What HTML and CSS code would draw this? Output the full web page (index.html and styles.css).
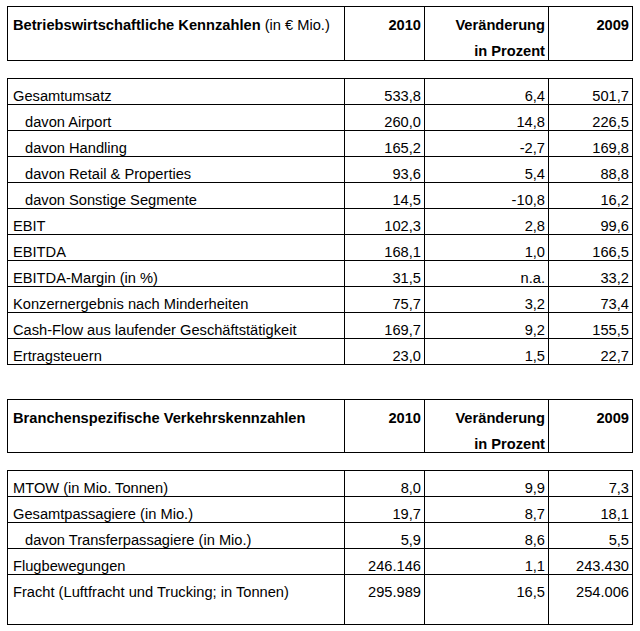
FILE: index.html
```html
<!DOCTYPE html>
<html lang="de">
<head>
<meta charset="utf-8">
<title>Kennzahlen</title>
<link rel="stylesheet" href="styles.css">
</head>
<body>
<div class="page">
  <table class="tbl head head-a">
    <tr>
      <td class="c1"><div class="hd"><b>Betriebswirtschaftliche Kennzahlen</b> (in € Mio.)</div></td>
      <td class="c2 num"><div class="hd"><b>2010</b></div></td>
      <td class="c3 num"><div class="hd"><b>Veränderung<br>in Prozent</b></div></td>
      <td class="c4 num"><div class="hd"><b>2009</b></div></td>
    </tr>
  </table>

  <table class="tbl body body-b">
    <tr><td class="c1">Gesamtumsatz</td><td class="c2 num">533,8</td><td class="c3 num">6,4</td><td class="c4 num">501,7</td></tr>
    <tr><td class="c1 ind">davon Airport</td><td class="c2 num">260,0</td><td class="c3 num">14,8</td><td class="c4 num">226,5</td></tr>
    <tr><td class="c1 ind">davon Handling</td><td class="c2 num">165,2</td><td class="c3 num">-2,7</td><td class="c4 num">169,8</td></tr>
    <tr><td class="c1 ind">davon Retail &amp; Properties</td><td class="c2 num">93,6</td><td class="c3 num">5,4</td><td class="c4 num">88,8</td></tr>
    <tr><td class="c1 ind">davon Sonstige Segmente</td><td class="c2 num">14,5</td><td class="c3 num">-10,8</td><td class="c4 num">16,2</td></tr>
    <tr><td class="c1">EBIT</td><td class="c2 num">102,3</td><td class="c3 num">2,8</td><td class="c4 num">99,6</td></tr>
    <tr><td class="c1">EBITDA</td><td class="c2 num">168,1</td><td class="c3 num">1,0</td><td class="c4 num">166,5</td></tr>
    <tr><td class="c1">EBITDA-Margin (in %)</td><td class="c2 num">31,5</td><td class="c3 num">n.a.</td><td class="c4 num">33,2</td></tr>
    <tr><td class="c1">Konzernergebnis nach Minderheiten</td><td class="c2 num">75,7</td><td class="c3 num">3,2</td><td class="c4 num">73,4</td></tr>
    <tr><td class="c1">Cash-Flow aus laufender Geschäftstätigkeit</td><td class="c2 num">169,7</td><td class="c3 num">9,2</td><td class="c4 num">155,5</td></tr>
    <tr><td class="c1">Ertragsteuern</td><td class="c2 num">23,0</td><td class="c3 num">1,5</td><td class="c4 num">22,7</td></tr>
  </table>

  <table class="tbl head head-c">
    <tr>
      <td class="c1"><div class="hd"><b>Branchenspezifische Verkehrskennzahlen</b></div></td>
      <td class="c2 num"><div class="hd"><b>2010</b></div></td>
      <td class="c3 num"><div class="hd"><b>Veränderung<br>in Prozent</b></div></td>
      <td class="c4 num"><div class="hd"><b>2009</b></div></td>
    </tr>
  </table>

  <table class="tbl body body-d">
    <tr><td class="c1">MTOW (in Mio. Tonnen)</td><td class="c2 num">8,0</td><td class="c3 num">9,9</td><td class="c4 num">7,3</td></tr>
    <tr><td class="c1">Gesamtpassagiere (in Mio.)</td><td class="c2 num">19,7</td><td class="c3 num">8,7</td><td class="c4 num">18,1</td></tr>
    <tr><td class="c1 ind">davon Transferpassagiere (in Mio.)</td><td class="c2 num">5,9</td><td class="c3 num">8,6</td><td class="c4 num">5,5</td></tr>
    <tr><td class="c1">Flugbewegungen</td><td class="c2 num">246.146</td><td class="c3 num">1,1</td><td class="c4 num">243.430</td></tr>
    <tr class="tall"><td class="c1">Fracht (Luftfracht und Trucking; in Tonnen)</td><td class="c2 num">295.989</td><td class="c3 num">16,5</td><td class="c4 num">254.006</td></tr>
  </table>
</div>
</body>
</html>
```

FILE: styles.css
```css
html, body {
  margin: 0;
  padding: 0;
  background: #ffffff;
}

.page {
  padding: 6px 0 0 7px;
  font-family: "Liberation Sans", Arial, sans-serif;
  font-size: 11pt;
  color: #000000;
}

.tbl {
  box-sizing: border-box;
  width: 626px;
  table-layout: fixed;
  border-collapse: separate;
  border-spacing: 0;
  border-top: 1px solid #000;
  border-left: 1px solid #000;
}

.tbl td {
  box-sizing: border-box;
  border-right: 1px solid #000;
  border-bottom: 1px solid #000;
  padding: 9px 3px 0 5px;
  line-height: 16px;
  vertical-align: top;
  white-space: nowrap;
}

.tbl .c1 { width: 337px; }
.tbl .c2 { width: 80px; }
.tbl .c3 { width: 124px; }
.tbl .c4 { width: 84px; }

.tbl td.num { text-align: right; }
.tbl td.ind { padding-left: 17px; }

.head td { padding-top: 0; }
.hd {
  box-sizing: border-box;
  height: 53px;
  padding-top: 5px;
  line-height: 26px;
}
.head-c .hd { height: 52px; }

.body-b { margin-top: 17px; }
.head-c { margin-top: 34px; }
.body-d { margin-top: 17px; }

.tall td { padding-bottom: 24px; }
```
